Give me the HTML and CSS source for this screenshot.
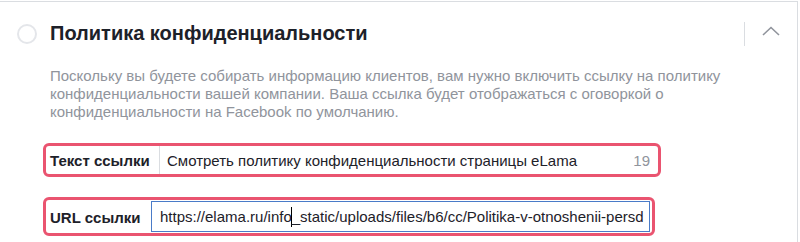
FILE: index.html
```html
<!DOCTYPE html>
<html lang="ru">
<head>
    <meta charset="UTF-8">
    <title>Политика конфиденциальности</title>
    <link rel="stylesheet" href="styles.css">
</head>
<body>
    <div class="card">
        <div class="card-header">
            <span class="radio"></span>
            <h2 class="title">Политика конфиденциальности</h2>
            <div class="header-actions">
                <span class="divider"></span>
                <svg class="chevron" width="18" height="10" viewBox="0 0 18 10">
                    <path d="M1 9 L9 1.5 L17 9" fill="none" stroke="#90949c" stroke-width="1.6"/>
                </svg>
            </div>
        </div>

        <div class="card-body">
            <p class="hint">Поскольку вы будете собирать информацию клиентов, вам нужно включить ссылку на политику конфиденциальности вашей компании. Ваша ссылка будет отображаться с оговоркой о конфиденциальности на Facebook по умолчанию.</p>

            <div class="field field-text">
                <div class="field-label">Текст ссылки</div>
                <div class="field-input">
                    <span class="value">Смотреть политику конфиденциальности страницы eLama</span>
                    <span class="counter">19</span>
                </div>
            </div>

            <div class="field field-url">
                <div class="field-label">URL ссылки</div>
                <div class="field-input focused">
                    <span class="value">https://elama.ru/info<span class="caret"></span>_static/uploads/files/b6/cc/Politika-v-otnoshenii-persd</span>
                </div>
            </div>
        </div>
    </div>
</body>
</html>
```

FILE: styles.css
```css
* {
    margin: 0;
    padding: 0;
    box-sizing: border-box;
}

body {
    background: #fff;
    color: #1d2129;
    font-family: "Liberation Sans", Arial, sans-serif;
    font-size: 15px;
}

.card {
    margin-top: 1px;
    width: 798px;
    height: 241px;
    overflow: hidden;
    border-top: 1px solid #dadde1;
    border-right: 1px solid #dadde1;
}

.card-header {
    display: flex;
    align-items: center;
    height: 63px;
    padding-left: 17px;
}

.radio {
    width: 20px;
    height: 20px;
    border: 2px solid #e4e6ea;
    border-radius: 50%;
    margin-right: 13px;
}

.title {
    font-size: 20px;
    font-weight: bold;
    color: #1d2129;
}

.header-actions {
    margin-left: auto;
    display: flex;
    align-items: center;
    padding-right: 17px;
}

.divider {
    width: 1px;
    height: 24px;
    background: #dadde1;
    margin-right: 17px;
}

.chevron {
    display: block;
    margin-top: -6px;
}

.card-body {
    padding: 2px 0 0 43px;
}

.hint {
    width: 690px;
    margin-left: 7px;
    color: #90949c;
    line-height: 18px;
}

.field {
    display: flex;
    border: 3px solid #ea5470;
    border-radius: 6px;
    background: #fff;
}

.field-text {
    margin-top: 22px;
    width: 618px;
    height: 34px;
}

.field-url {
    margin-top: 20px;
    width: 612px;
    height: 39px;
}

.field-label {
    display: flex;
    flex-shrink: 0;
    align-items: center;
    padding-left: 4px;
    font-weight: bold;
    color: #1d2129;
}

.field-text .field-label {
    width: 114px;
    border-right: 1px solid #dadde1;
}

.field-url .field-label {
    width: 105px;
    padding-top: 2px;
}

.field-input {
    flex: 1;
    min-width: 0;
    display: flex;
    align-items: center;
    padding: 0 8px 0 7px;
    color: #1d2129;
    white-space: nowrap;
    overflow: hidden;
}

.field-input.focused {
    margin: 1px 2px 1px 0;
    border: 1px solid #4a7bc8;
    padding-left: 8px;
}

.counter {
    margin-left: auto;
    color: #90949c;
}

.caret {
    display: inline-block;
    width: 1px;
    height: 20px;
    margin-left: -1px;
    background: #000;
    vertical-align: -5px;
}
```
